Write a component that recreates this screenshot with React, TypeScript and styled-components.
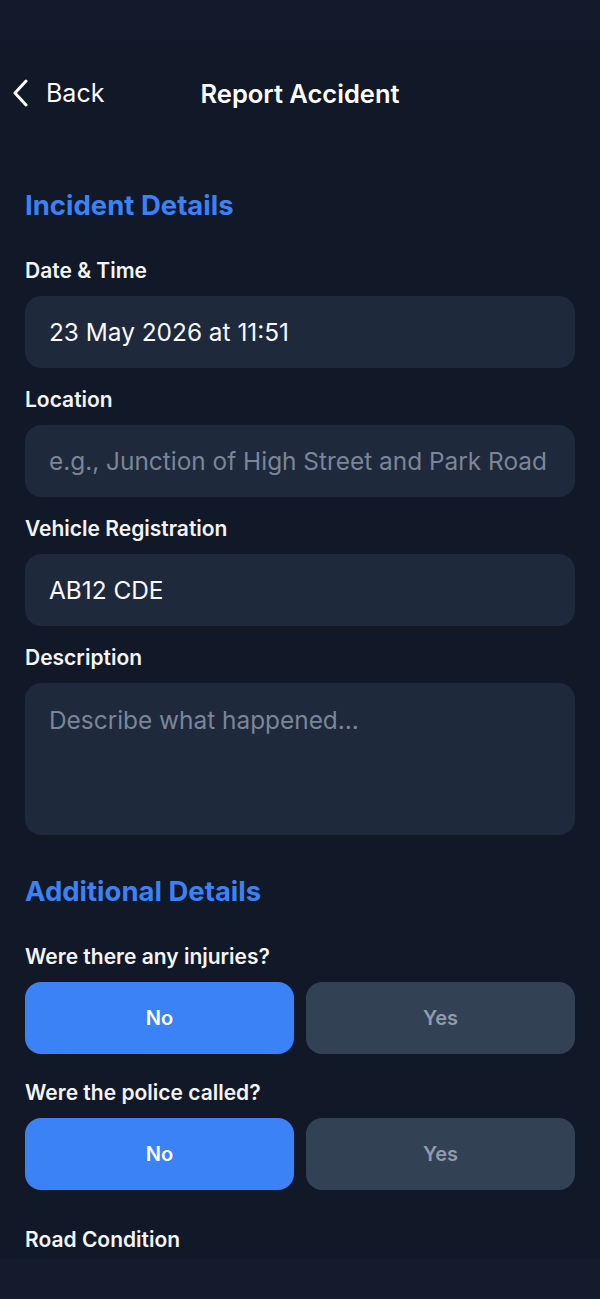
import styled, { createGlobalStyle } from "styled-components";

const GlobalStyle = createGlobalStyle`
    * { box-sizing: border-box; }
    body {
        margin: 0;
        background: #111827;
        font-family: Inter, "Noto Sans", sans-serif;
        -webkit-font-smoothing: antialiased;
    }
`

function ChoiceRow({ selected }: { selected: "No" | "Yes" }) {
    return (
        <ChoiceWrapper>
            <Choice active={selected === "No"}>No</Choice>
            <Choice active={selected === "Yes"}>Yes</Choice>
        </ChoiceWrapper>
    )
}

function App() {
    return (
        <>
            <GlobalStyle />
            <Page>
                <StatusBar />
                <NavBar>
                    <BackButton>
                        <svg width="16" height="28" viewBox="0 0 16 28" fill="none">
                            <path d="M13 2 L2 14 L13 26" stroke="#ffffff" strokeWidth="3" strokeLinecap="round" strokeLinejoin="round" />
                        </svg>
                        <span>Back</span>
                    </BackButton>
                    <Title>Report Accident</Title>
                </NavBar>

                <Content>
                    <SectionTitle>Incident Details</SectionTitle>

                    <Label>Date &amp; Time</Label>
                    <Field readOnly value="23 May 2026 at 11:51" />

                    <Label $gap={20}>Location</Label>
                    <Field readOnly placeholder="e.g., Junction of High Street and Park Road" />

                    <Label $gap={20}>Vehicle Registration</Label>
                    <Field readOnly value="AB12 CDE" />

                    <Label $gap={20}>Description</Label>
                    <TextArea readOnly placeholder="Describe what happened..." />

                    <SectionTitle $gap={40}>Additional Details</SectionTitle>

                    <Label>Were there any injuries?</Label>
                    <ChoiceRow selected="No" />

                    <Label $gap={27}>Were the police called?</Label>
                    <ChoiceRow selected="No" />

                    <Label $last>Road Condition</Label>
                </Content>
                <BottomBar />
            </Page>
        </>
    )
}

const Page = styled.div`
    min-height: 1299px;
    display: flex;
    flex-direction: column;
    background: #111827;
    color: #f9fafb;
`

const StatusBar = styled.div`
    height: 40px;
    background: #121a2c;
`

const NavBar = styled.div`
    height: 106px;
    display: flex;
    align-items: center;
    justify-content: center;
    position: relative;
`

const BackButton = styled.div`
    position: absolute;
    left: 13px;
    top: 50%;
    transform: translateY(-50%);
    display: flex;
    align-items: center;
    gap: 17px;
    font-size: 25px;
    color: #ffffff;

    svg {
        display: block;
    }
`

const Title = styled.h1`
    margin: 0;
    font-size: 25.5px;
    font-weight: 600;
    color: #ffffff;
`

const Content = styled.div`
    flex: 1;
    padding: 0 25px;
    display: flex;
    flex-direction: column;
`

const SectionTitle = styled.h2<{ $gap?: number }>`
    margin: ${p => p.$gap ?? 43}px 0 0;
    font-size: 27.5px;
    line-height: 32px;
    font-weight: 700;
    color: #3b82f6;
`

const Label = styled.label<{ $gap?: number; $last?: boolean }>`
    margin-top: ${p => p.$gap ?? 38}px;
    margin-bottom: ${p => (p.$last ? 6 : 13)}px;
    font-size: 21px;
    line-height: 24px;
    font-weight: 600;
    color: #f3f4f6;
`

const Field = styled.input`
    height: 72px;
    width: 100%;
    border: none;
    outline: none;
    border-radius: 16px;
    background: #1e293b;
    padding: 0 24px;
    font-family: inherit;
    font-size: 24.4px;
    color: #f9fafb;

    &::placeholder {
        color: #7a8698;
    }
`

const TextArea = styled.textarea`
    height: 152px;
    width: 100%;
    border: none;
    outline: none;
    resize: none;
    border-radius: 16px;
    background: #1e293b;
    padding: 20px 24px;
    font-family: inherit;
    font-size: 24.4px;
    line-height: 34px;
    color: #f9fafb;

    &::placeholder {
        color: #7a8698;
    }
`

const ChoiceWrapper = styled.div`
    display: grid;
    grid-template-columns: 1fr 1fr;
    gap: 12px;
`

const Choice = styled.button<{ active: boolean }>`
    height: 72px;
    border: none;
    border-radius: 16px;
    font-family: inherit;
    font-size: 20px;
    font-weight: 600;
    background: ${p => (p.active ? "#3b82f6" : "#334155")};
    color: ${p => (p.active ? "#ffffff" : "#8f9bad")};
`

const BottomBar = styled.div`
    height: 41px;
    background: #131b2d;
`

export default App;
